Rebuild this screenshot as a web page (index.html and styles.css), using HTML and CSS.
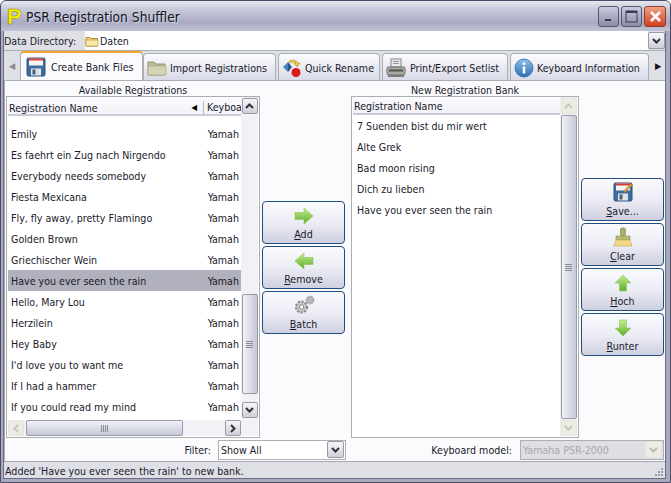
FILE: index.html
```html
<!DOCTYPE html>
<html lang="en">
<head>
<meta charset="utf-8">
<title>PSR Registration Shuffler</title>
<link rel="stylesheet" href="styles.css">
</head>
<body>
<svg class="defs" width="0" height="0">
  <defs>
    <linearGradient id="gr" x1="0" y1="0" x2="0" y2="1"><stop offset="0" stop-color="#c4ee8c"/><stop offset="1" stop-color="#5cae2c"/></linearGradient>
    <linearGradient id="bl" x1="0" y1="0" x2="0" y2="1"><stop offset="0" stop-color="#8fc0ea"/><stop offset="1" stop-color="#2a6db5"/></linearGradient>
    <symbol id="floppy" viewBox="0 0 20 20">
      <rect x="1" y="1" width="18" height="18" rx="1.5" fill="#3f6c9e" stroke="#2f4f78"/>
      <rect x="3" y="1.5" width="14" height="7" fill="#f4f4f4"/>
      <rect x="3" y="1.5" width="14" height="2" fill="#d8402c"/>
      <rect x="5" y="11.5" width="10" height="7" fill="#dfe3e8"/>
      <rect x="6.5" y="12.5" width="3" height="5" fill="#4d5f78"/>
    </symbol>
  </defs>
</svg>
<div class="window">
  <header class="titlebar">
    <span class="app-logo">P</span>
    <span class="app-title">PSR Registration Shuffler</span>
    <div class="win-buttons">
      <span class="win-btn"><svg width="10" height="10" viewBox="0 0 10 10"><rect x="1" y="7" width="6" height="2" fill="#3c3c50"/></svg></span>
      <span class="win-btn"><svg width="13" height="13" viewBox="0 0 13 13"><rect x="1" y="1" width="11" height="11" fill="none" stroke="#3c3c50"/><rect x="1" y="1" width="11" height="2" fill="#3c3c50"/></svg></span>
      <span class="win-btn win-close"><svg width="13" height="13" viewBox="0 0 13 13"><path d="M2 2 L11 11 M11 2 L2 11" stroke="#fff" stroke-width="2.6"/></svg></span>
    </div>
  </header>

  <div class="client">
    <div class="dir-row">
      <span class="dir-label">Data Directory:</span>
      <div class="dir-value">
        <svg class="dir-folder" width="14" height="12" viewBox="0 0 14 12"><path d="M1 2.5 H5 L6 3.5 H12.5 V11 H1 Z" fill="#f4d679" stroke="#a88a3c"/><path d="M1 5 H13 V11 H1Z" fill="#fbe9a6" stroke="#a88a3c" stroke-width=".6"/></svg>
        <span>Daten</span>
      </div>
      <span class="combo-btn"><svg width="9" height="6" viewBox="0 0 9 6"><path d="M1 1 L4.5 4.5 L8 1" fill="none" stroke="#333" stroke-width="2"/></svg></span>
    </div>

    <nav class="tabs">
      <span class="tab-arrow tab-arrow-off">&#9664;</span>
      <div class="tab tab-active">
        <svg class="tab-icon" width="20" height="20"><use href="#floppy"/></svg>
        <span>Create Bank Files</span>
      </div>
      <div class="tab tab-import">
        <svg class="tab-icon" width="20" height="18" viewBox="0 0 20 18"><path d="M1 3 H7 L9 5 H18 V16 H1 Z" fill="#bcbc98" stroke="#96966f"/><path d="M1 7 H19 V16 H1 Z" fill="#d5d5b4" stroke="#a2a27e" stroke-width=".6"/></svg>
        <span>Import Registrations</span>
      </div>
      <div class="tab tab-rename">
        <svg class="tab-icon" width="20" height="20" viewBox="0 0 20 20"><path d="M1 9 L6 4 L6 14 Z" fill="#4c7fbe"/><path d="M6 4 L10 9 L6 14 Z" fill="#28568f"/><path d="M7 3 Q13 0 16 5 L18 5 L15 9 L12 5 L14 5 Q12 3 8 5 Z" fill="#f0c23a" stroke="#b08a1e" stroke-width=".5"/><circle cx="14" cy="14.500" r="4.500" fill="#dd1a1a"/></svg>
        <span>Quick Rename</span>
      </div>
      <div class="tab tab-print">
        <svg class="tab-icon" width="20" height="20" viewBox="0 0 20 20"><rect x="5" y="1" width="10" height="8" fill="#e8e8e8" stroke="#888"/><path d="M7 3.500H13M7 5.500H13" stroke="#999"/><rect x="1" y="9" width="18" height="8" rx="1.500" fill="#a9a9a4" stroke="#6f6f6a"/><rect x="3" y="11.500" width="14" height="2" fill="#55554f"/><rect x="2" y="17" width="16" height="2" fill="#7c7c76"/></svg>
        <span>Print/Export Setlist</span>
      </div>
      <div class="tab tab-info">
        <svg class="tab-icon" width="20" height="20" viewBox="0 0 20 20"><circle cx="10" cy="10" r="9" fill="url(#bl)" stroke="#2d6aa8" stroke-width=".8"/><rect x="8.700" y="8.500" width="2.600" height="7" fill="#fff"/><rect x="8.700" y="4.500" width="2.600" height="2.500" fill="#fff"/></svg>
        <span>Keyboard Information</span>
      </div>
      <span class="tab-arrow tab-arrow-next">&#9654;</span>
    </nav>

    <main class="page">
      <div class="panels">
        <section class="col-left">
          <h2 class="group-title">Available Registrations</h2>
          <div class="listbox">
            <div class="list-main">
              <div class="list-header">
                <span class="hdr-name">Registration Name</span>
                <span class="sort-arrow">&#9664;</span>
                <span class="hdr-key">Keyboa</span>
              </div>
              <ul class="rows">
                <li class="row"><span>Emily</span><span>Yamah</span></li>
                <li class="row"><span>Es faehrt ein Zug nach Nirgendo</span><span>Yamah</span></li>
                <li class="row"><span>Everybody needs somebody</span><span>Yamah</span></li>
                <li class="row"><span>Fiesta Mexicana</span><span>Yamah</span></li>
                <li class="row"><span>Fly, fly away, pretty Flamingo</span><span>Yamah</span></li>
                <li class="row"><span>Golden Brown</span><span>Yamah</span></li>
                <li class="row"><span>Griechischer Wein</span><span>Yamah</span></li>
                <li class="row row-selected"><span>Have you ever seen the rain</span><span>Yamah</span></li>
                <li class="row"><span>Hello, Mary Lou</span><span>Yamah</span></li>
                <li class="row"><span>Herzilein</span><span>Yamah</span></li>
                <li class="row"><span>Hey Baby</span><span>Yamah</span></li>
                <li class="row"><span>I'd love you to want me</span><span>Yamah</span></li>
                <li class="row"><span>If I had a hammer</span><span>Yamah</span></li>
                <li class="row"><span>If you could read my mind</span><span>Yamah</span></li>
              </ul>
              <div class="hscroll">
                <span class="sb-btn sb-off"><svg width="6" height="9" viewBox="0 0 6 9"><path d="M5 1 L1.500 4.500 L5 8" fill="none" stroke="#c8c8bc" stroke-width="2"/></svg></span>
                <span class="hthumb"><span class="hgrip"></span></span>
                <span class="sb-btn"><svg width="6" height="9" viewBox="0 0 6 9"><path d="M1 1 L4.500 4.500 L1 8" fill="none" stroke="#333" stroke-width="2"/></svg></span>
              </div>
            </div>
            <div class="vscroll vscroll-left">
              <span class="sb-btn"><svg width="9" height="6" viewBox="0 0 9 6"><path d="M1 5 L4.500 1.500 L8 5" fill="none" stroke="#333" stroke-width="2"/></svg></span>
              <span class="vthumb"><span class="vgrip"></span></span>
              <span class="sb-btn"><svg width="9" height="6" viewBox="0 0 9 6"><path d="M1 1 L4.500 4.500 L8 1" fill="none" stroke="#333" stroke-width="2"/></svg></span>
            </div>
          </div>
        </section>

        <section class="col-mid">
          <button class="action">
            <svg width="20" height="18" viewBox="0 0 20 18"><path d="M1 5.500 H10 V1 L19 9 L10 17 V12.500 H1 Z" fill="url(#gr)" stroke="#8ec45c" stroke-width=".6"/></svg>
            <span><u>A</u>dd</span>
          </button>
          <button class="action">
            <svg width="20" height="18" viewBox="0 0 20 18"><path d="M19 5.500 H10 V1 L1 9 L10 17 V12.500 H19 Z" fill="url(#gr)" stroke="#8ec45c" stroke-width=".6"/></svg>
            <span><u>R</u>emove</span>
          </button>
          <button class="action">
            <svg width="22" height="20" viewBox="0 0 22 20"><circle cx="8.500" cy="12" r="5.500" fill="#c9c9c5" stroke="#8a8a8a" stroke-width="2.200" stroke-dasharray="2.200 1.400"/><circle cx="8.500" cy="12" r="2.200" fill="#fff" stroke="#8a8a8a"/><circle cx="17" cy="5" r="3.600" fill="#bbb" stroke="#999" stroke-width="1.600" stroke-dasharray="1.500 1"/></svg>
            <span><u>B</u>atch</span>
          </button>
        </section>

        <section class="col-right">
          <h2 class="group-title">New Registration Bank</h2>
          <div class="listbox listbox-right">
            <div class="list-main">
              <div class="list-header list-header-right">
                <span class="hdr-name">Registration Name</span>
              </div>
              <ul class="rows rows-right">
                <li class="row"><span>7 Suenden bist du mir wert</span></li>
                <li class="row"><span>Alte Grek</span></li>
                <li class="row"><span>Bad moon rising</span></li>
                <li class="row"><span>Dich zu lieben</span></li>
                <li class="row"><span>Have you ever seen the rain</span></li>
              </ul>
            </div>
            <div class="vscroll vscroll-right">
              <span class="sb-btn sb-off"><svg width="9" height="6" viewBox="0 0 9 6"><path d="M1 5 L4.500 1.500 L8 5" fill="none" stroke="#c8c8bc" stroke-width="2"/></svg></span>
              <span class="vthumb vthumb-full"><span class="vgrip"></span></span>
              <span class="sb-btn sb-off"><svg width="9" height="6" viewBox="0 0 9 6"><path d="M1 1 L4.500 4.500 L8 1" fill="none" stroke="#c8c8bc" stroke-width="2"/></svg></span>
            </div>
          </div>
        </section>

        <section class="col-actions">
          <button class="action">
            <svg width="20" height="20" viewBox="0 0 20 20"><use href="#floppy" width="20" height="20"/><path d="M11 9 L18 1.500 L19.500 3 L12.500 10 L10.500 10.500 Z" fill="#e8a23a" stroke="#8a5a1a" stroke-width=".5"/></svg>
            <span><u>S</u>ave...</span>
          </button>
          <button class="action">
            <svg width="20" height="20" viewBox="0 0 20 20"><rect x="7.500" y="1" width="5" height="8" rx="2" fill="#a7b266" stroke="#7a8444" stroke-width=".7"/><path d="M3 9 H17 V13 H3 Z" fill="#b9bb7a" stroke="#8a8c50" stroke-width=".6"/><path d="M3 13 H17 L19 19 H1 Z" fill="#f0d98a" stroke="#c2a850" stroke-width=".6"/></svg>
            <span><u>C</u>lear</span>
          </button>
          <button class="action">
            <svg width="18" height="18" viewBox="0 0 18 18"><path d="M9 1 L17 9 H12.500 V17 H5.500 V9 H1 Z" fill="url(#gr)" stroke="#8ec45c" stroke-width=".6"/></svg>
            <span><u>H</u>och</span>
          </button>
          <button class="action">
            <svg width="18" height="18" viewBox="0 0 18 18"><path d="M9 17 L17 9 H12.500 V1 H5.500 V9 H1 Z" fill="url(#gr)" stroke="#8ec45c" stroke-width=".6"/></svg>
            <span><u>R</u>unter</span>
          </button>
        </section>
      </div>

      <div class="footer-row">
        <div class="footer-left">
          <span class="field-label">Filter:</span>
          <div class="combo">
            <span class="combo-text">Show All</span>
            <span class="combo-btn"><svg width="9" height="6" viewBox="0 0 9 6"><path d="M1 1 L4.500 4.500 L8 1" fill="none" stroke="#333" stroke-width="2"/></svg></span>
          </div>
        </div>
        <div class="footer-right">
          <span class="field-label">Keyboard model:</span>
          <div class="combo combo-disabled">
            <span class="combo-text">Yamaha PSR-2000</span>
            <span class="combo-btn combo-btn-off"><svg width="9" height="6" viewBox="0 0 9 6"><path d="M1 1 L4.500 4.500 L8 1" fill="none" stroke="#bdbdb2" stroke-width="2"/></svg></span>
          </div>
        </div>
      </div>
    </main>

    <footer class="status">
      <span>Added 'Have you ever seen the rain' to new bank.</span>
      <svg class="grip" width="9" height="9" viewBox="0 0 9 9"><path d="M6 0h2v2H6zM3 3h2v2H3zM6 3h2v2H6zM0 6h2v2H0zM3 6h2v2H3zM6 6h2v2H6z" fill="#9a9aa8"/></svg>
    </footer>
  </div>
</div>
</body>
</html>
```
FILE: styles.css
```css
* { box-sizing: border-box; }
html, body { margin: 0; padding: 0; }
body {
  width: 671px;
  height: 483px;
  overflow: hidden;
  background: #fff;
  font-family: "DejaVu Sans", sans-serif;
  font-stretch: condensed;
  font-size: 10.6px;
  color: #1a1a2a;
}
.defs { position: absolute; }

.window {
  width: 671px;
  height: 483px;
  display: flex;
  flex-direction: column;
  background: #a9aabd;
  border: 1px solid #4b4c68;
  border-radius: 6px 6px 0 0;
  overflow: hidden;
}

.titlebar {
  height: 30px;
  flex: none;
  display: flex;
  align-items: center;
  padding: 1px 4px 0 6px;
  background: linear-gradient(#e6e6ee 0, #c7c8d8 30%, #a9aac2 72%, #c2c3d4 100%);
}
.app-logo {
  width: 15px;
  font: bold 22px "Liberation Sans", sans-serif;
  color: #f7f000;
  -webkit-text-stroke: 0.5px #8a8a00;
  margin-right: 4px;
}
.app-title {
  font-size: 13.7px;
  color: #15151f;
  flex: 1;
  text-shadow: 1px 1px 1px #dfe0ea;
}
.win-buttons { display: flex; gap: 2px; }
.win-btn {
  width: 21px;
  height: 21px;
  display: flex;
  align-items: center;
  justify-content: center;
  border: 1px solid #55566f;
  border-radius: 3px;
  background: linear-gradient(#cbcce0, #8b8ca8);
}
.win-close {
  width: 22px;
  background: linear-gradient(#f0a088, #d2401f);
  border-color: #8a4030;
}

.client {
  flex: 1;
  display: flex;
  flex-direction: column;
  margin: 0 4px 3px 2px;
  min-height: 0;
  border: 1px solid #6d6e85;
  border-top: 0;
}

.dir-row {
  height: 20px;
  flex: none;
  display: flex;
  align-items: center;
  background: #dfdfe6;
  border-bottom: 1px solid #a8b0b4;
}
.dir-label { width: 81px; flex: none; padding-top: 1px; }
.dir-value {
  flex: 1;
  height: 100%;
  display: flex;
  align-items: center;
  gap: 1px;
  background: #fff;
  padding-top: 1px;
}

.combo-btn {
  width: 17px;
  height: 17px;
  flex: none;
  display: flex;
  align-items: center;
  justify-content: center;
  border: 1px solid #9a9aa6;
  border-radius: 2px;
  background: linear-gradient(#f6f6fa, #cfcfdb);
}
.combo-btn-off { background: #ecece4; border-color: #e4e4dc; }

.tabs {
  height: 29px;
  flex: none;
  display: flex;
  align-items: flex-end;
  background: #dfdfe6;
}
.tab-arrow {
  width: 16px;
  align-self: center;
  text-align: center;
  font-size: 9px;
  color: #111;
  flex: none;
}
.tab-arrow-off { color: #8d8d90; }
.tab-arrow-next { margin-left: 1px; }
.tab {
  height: 27px;
  display: flex;
  align-items: center;
  gap: 3px;
  padding: 2px 0 0 3px;
  background: linear-gradient(#fbfbfe, #d9dae8);
  border: 1px solid #a8b0b4;
  border-bottom: 0;
  border-radius: 4px 4px 0 0;
  white-space: nowrap;
  flex: none;
  margin-left: 2px;
}
.tab-active {
  height: 29px;
  width: 123px;
  margin-left: 0;
  padding: 0 0 0 5px;
  gap: 5px;
  background: #fbfbfe;
  border-top: 2px solid #f0a630;
}
.tab-import { width: 133px; margin-left: 0; }
.tab-rename { width: 102px; }
.tab-print { width: 126px; gap: 4px; }
.tab-info { width: 139px; }
.tab-icon { flex: none; }

.page {
  flex: 1;
  min-height: 0;
  display: flex;
  flex-direction: column;
  background: #fbfbfe;
  border-top: 1px solid #a8b0b4;
  border-left: 1px solid #a8b0b4;
  padding: 0 1px;
}
.panels {
  flex: 1;
  min-height: 0;
  display: flex;
}
.group-title {
  margin: 0;
  height: 15px;
  font-weight: normal;
  font-size: inherit;
  line-height: 19px;
  text-align: center;
  flex: none;
}
.col-left { width: 254px; display: flex; flex-direction: column; flex: none; }
.col-right { width: 228px; margin-left: 6px; display: flex; flex-direction: column; flex: none; }
.col-mid,
.col-actions {
  width: 83px;
  margin-left: 2px;
  flex: none;
  display: flex;
  flex-direction: column;
  justify-content: center;
  gap: 2px;
  padding-top: 15px;
}
.action {
  width: 83px;
  height: 43px;
  flex: none;
  display: flex;
  flex-direction: column;
  align-items: center;
  justify-content: flex-end;
  padding: 0 0 2px;
  font: inherit;
  color: #1a1a2a;
  background: linear-gradient(#fafafe, #ecedf5 50%, #cfd0e0);
  border: 1px solid #1f4f80;
  border-radius: 4px;
}
.action svg { margin-bottom: 3px; }
.action span { line-height: 13px; }

.listbox {
  flex: 1;
  min-height: 0;
  display: flex;
  border: 1px solid #a8b0b4;
  background: #fff;
  padding: 0 1px 1px 1px;
}
.list-main {
  flex: 1;
  min-width: 0;
  display: flex;
  flex-direction: column;
}
.list-header {
  height: 19px;
  flex: none;
  display: flex;
  align-items: center;
  padding: 4px 0 0 1px;
  background: linear-gradient(#fbfbfe, #f2f2f8);
  border-bottom: 2px solid #c9cbd8;
  overflow: hidden;
}
.list-header-right { height: 18px; padding-top: 2px; }
.hdr-name { flex: 1; }
.sort-arrow { font-size: 8px; color: #000; margin-right: 6px; }
.hdr-key {
  width: 38px;
  border-left: 1px solid #b8b8c4;
  padding-left: 3px;
  height: 13px;
  line-height: 13px;
  overflow: hidden;
  flex: none;
}
.rows {
  list-style: none;
  margin: 0;
  padding: 7px 0 0;
  flex: 1;
  min-height: 0;
  overflow: hidden;
}
.rows-right { padding-top: 0; }
.row {
  height: 21px;
  display: flex;
  justify-content: space-between;
  align-items: center;
  padding: 0 2px 0 3px;
}
.rows-right .row { padding-left: 4px; }
.row-selected { background: #b0b1bc; }

.hscroll {
  height: 16px;
  flex: none;
  display: flex;
  background: #f2f2f6;
  align-items: stretch;
  margin-top: 1px;
}
.sb-btn {
  width: 16px;
  height: 16px;
  flex: none;
  display: flex;
  align-items: center;
  justify-content: center;
  border: 1px solid #9a9aa6;
  border-radius: 2px;
  background: linear-gradient(#f6f6fa, #cfcfdb);
}
.sb-off { background: #ecece4; border-color: #e4e4dc; }
.hthumb {
  width: 157px;
  margin-left: 2px;
  display: flex;
  align-items: center;
  justify-content: center;
  border: 1px solid #9a9aa6;
  border-radius: 2px;
  background: linear-gradient(#f2f2f8, #c6c7d8);
}
.hgrip {
  width: 7px;
  height: 7px;
  background: repeating-linear-gradient(90deg, #8b8b98 0 1px, transparent 1px 2px);
}
.hscroll .sb-btn:last-child { margin-left: 42px; }

.vscroll {
  width: 17px;
  flex: none;
  display: flex;
  flex-direction: column;
  background: #f2f2f6;
  align-items: center;
  padding-top: 1px;
}
.vscroll-left .vthumb { margin-top: 180px; height: 100px; }
.vscroll-left .sb-btn:last-child { margin-top: 8px; }
.vthumb {
  width: 16px;
  display: flex;
  align-items: center;
  justify-content: center;
  border: 1px solid #9a9aa6;
  border-radius: 2px;
  background: linear-gradient(90deg, #f2f2f8, #c6c7d8);
}
.vthumb-full { flex: 1; margin: 1px 0; }
.vgrip {
  width: 7px;
  height: 7px;
  background: repeating-linear-gradient(0deg, #8b8b98 0 1px, transparent 1px 2px);
}

.footer-row {
  height: 23px;
  flex: none;
  display: flex;
  align-items: center;
}
.footer-left {
  width: 340px;
  display: flex;
  align-items: center;
  justify-content: flex-end;
  gap: 7px;
}
.footer-right {
  width: 318px;
  display: flex;
  align-items: center;
  justify-content: flex-end;
  gap: 8px;
}
.combo {
  height: 20px;
  display: flex;
  align-items: center;
  border: 1px solid #a8b0b4;
  background: #fff;
  padding: 0 1px 0 2px;
  flex: none;
}
.footer-left .combo { width: 128px; }
.footer-right .combo { width: 144px; }
.combo-text { flex: 1; }
.combo-disabled { background: #dfdfe3; color: #a8a8a8; }

.status {
  height: 17px;
  flex: none;
  display: flex;
  align-items: center;
  justify-content: space-between;
  padding: 1px 1px 0;
  background: #dfdfe6;
  border-top: 1px solid #a8a8b4;
}
.grip { align-self: flex-end; margin-bottom: 1px; }
```
